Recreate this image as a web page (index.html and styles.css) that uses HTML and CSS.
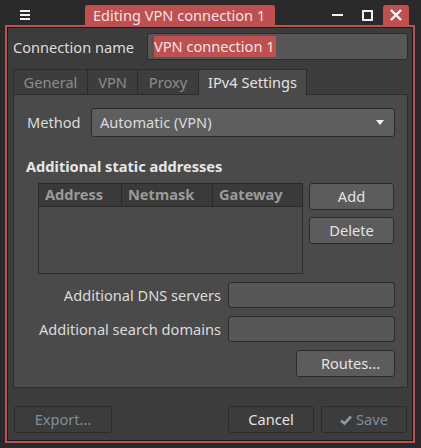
FILE: index.html
```html
<!DOCTYPE html>
<html>
<head>
<meta charset="utf-8">
<link rel="stylesheet" href="styles.css">
</head>
<body>
<div class="titlebar">
  <div class="menu-icon"><span></span><span></span><span></span></div>
  <div class="title-tab">Editing VPN connection 1</div>
  <div class="spacer"></div>
  <div class="win-btn min"><span></span></div>
  <div class="win-btn max"><span></span></div>
  <div class="win-btn close">
    <svg width="14" height="14" viewBox="0 0 14 14"><path d="M2 2 L12 12 M12 2 L2 12" stroke="#fff" stroke-width="2.4" fill="none"/></svg>
  </div>
</div>
<div class="window">
  <div class="inner">
    <div class="name-row">
      <label class="name-label">Connection name</label>
      <div class="field name-field"><span class="sel">VPN connection 1</span></div>
    </div>
    <div class="tabs">
      <div class="tab t-general">General</div>
      <div class="tab t-vpn">VPN</div>
      <div class="tab t-proxy">Proxy</div>
      <div class="tab active t-ipv4">IPv4 Settings</div>
    </div>
    <div class="pane">
      <div class="method-row">
        <span class="lbl">Method</span>
        <div class="combo"><span>Automatic (VPN)</span><span class="arrow"></span></div>
      </div>
      <div class="section-title">Additional static addresses</div>
      <div class="addr-row">
        <div class="table">
          <div class="thead">
            <div class="th c1">Address</div>
            <div class="th c2">Netmask</div>
            <div class="th c3">Gateway</div>
          </div>
        </div>
        <div class="side-btns">
          <div class="btn">Add</div>
          <div class="btn">Delete</div>
        </div>
      </div>
      <div class="form-grid">
        <span class="flbl">Additional DNS servers</span>
        <div class="field"></div>
        <span class="flbl">Additional search domains</span>
        <div class="field"></div>
      </div>
      <div class="routes-row"><div class="btn routes">Routes...</div></div>
    </div>
    <div class="bottom">
      <div class="btn bb export disabled">Export...</div>
      <div class="spacer"></div>
      <div class="btn bb cancel">Cancel</div>
      <div class="btn bb save disabled"><svg width="12" height="10" viewBox="0 0 12 10"><path d="M1 5.5 L4.5 8.5 L11 1.5" stroke="#8a9aa8" stroke-width="2.6" fill="none"/></svg>Save</div>
    </div>
  </div>
</div>
</body>
</html>
```
FILE: styles.css
```css
* { box-sizing: border-box; }
html, body { margin: 0; padding: 0; }
body {
  width: 421px;
  height: 448px;
  background: #2a2a2a;
  font-family: "Noto Sans", "Open Sans", sans-serif;
  font-size: 14.6px;
  color: #dcdcdc;
  overflow: hidden;
}
.titlebar {
  height: 25px;
  display: flex;
  align-items: flex-end;
  padding-left: 20px;
  padding-right: 12px;
}
.menu-icon {
  width: 10px;
  height: 10px;
  align-self: flex-start;
  margin-top: 10px;
  display: flex;
  flex-direction: column;
  justify-content: space-between;
}
.menu-icon span { display: block; height: 2px; background: #f2f2f2; }
.title-tab {
  margin-left: 55px;
  width: 190px;
  height: 20px;
  background: #c0504f;
  border-radius: 3px 3px 0 0;
  color: #f3e4e4;
  padding-left: 8px;
  line-height: 20px;
  white-space: nowrap;
}
.spacer { flex: 1; }
.win-btn {
  height: 20px;
  display: flex;
  align-items: center;
  justify-content: center;
}
.win-btn.min { width: 12px; margin-right: 18px; }
.win-btn.min span { width: 11px; height: 2px; background: #f2f2f2; }
.win-btn.max { width: 12px; margin-right: 10px; }
.win-btn.max span { width: 11px; height: 11px; border: 2px solid #f2f2f2; }
.win-btn.close {
  width: 26px;
  background: #c0504f;
  border-radius: 3px 3px 0 0;
}
.window {
  margin-left: 5px;
  width: 410px;
  height: 418px;
  border: 2px solid #c0504f;
}
.inner {
  height: 100%;
  border: 1px solid #1c1c1c;
  background: #3c3c3c;
  padding: 5px 4px 6px 5px;
  display: flex;
  flex-direction: column;
}
.name-row { display: flex; align-items: center; height: 27px; }
.name-label { width: 134px; color: #dcdcdc; }
.field {
  background: #575757;
  border: 1px solid #2b2b2b;
  border-radius: 3px;
  height: 26px;
}
.name-field {
  flex: 1;
  height: 27px;
  display: flex;
  align-items: center;
  padding-left: 6px;
}
.sel {
  background: #c0504f;
  color: #f4e6e6;
  height: 21px;
  line-height: 20px;
  padding-right: 1px;
}
.tabs { display: flex; margin-top: 9px; height: 25px; }
.tab {
  height: 25px;
  line-height: 24px;
  background: #3d3d3d;
  color: #8c8c8c;
  border: 1px solid #2c2c2c;
  border-bottom: none;
  text-align: center;
}
.tab + .tab { border-left: none; }
.t-general { width: 75px; }
.t-vpn { width: 50px; }
.t-proxy { width: 61px; }
.t-ipv4 { width: 108px; }
.tab.active {
  background: #4a4a4a;
  color: #e2e2e2;
  height: 26px;
  margin-bottom: -1px;
  position: relative;
  z-index: 1;
}
.pane {
  height: 294px;
  background: #4a4a4a;
  border: 1px solid #2c2c2c;
  padding: 13px 12px 0 13px;
  display: flex;
  flex-direction: column;
}
.method-row { display: flex; align-items: center; height: 29px; line-height: 27px; }
.lbl { width: 64px; }
.combo {
  flex: 1;
  height: 29px;
  background: #5e5e5e;
  border: 1px solid #2b2b2b;
  border-radius: 3px;
  display: flex;
  align-items: center;
  justify-content: space-between;
  padding: 0 10px 0 8px;
}
.arrow {
  width: 0; height: 0;
  border-left: 4.5px solid transparent;
  border-right: 4.5px solid transparent;
  border-top: 5px solid #f0f0f0;
}
.section-title {
  margin-top: 19px;
  font-weight: bold;
  height: 20px;
  line-height: 20px;
  color: #e6e6e6;
  margin-left: -1px;
}
.addr-row { display: flex; margin-top: 7px; margin-left: 11px; }
.table {
  width: 265px;
  height: 91px;
  border: 1px solid #2a2a2a;
  background: #4a4a4a;
}
.thead { display: flex; height: 23px; background: #3a3a3a; border-bottom: 1px solid #2a2a2a; }
.th {
  font-weight: bold;
  color: #9a9a9a;
  line-height: 21px;
  padding-left: 6px;
  border-right: 1px solid #2a2a2a;
  white-space: nowrap;
}
.c1 { width: 83px; }
.c2 { width: 91px; }
.c3 { flex: 1; border-right: none; }
.side-btns { margin-left: 6px; display: flex; flex-direction: column; gap: 7px; }
.btn {
  background: #5c5c5c;
  border: 1px solid #2b2b2b;
  border-radius: 3px;
  height: 27px;
  line-height: 25px;
  text-align: center;
  color: #e4e4e4;
}
.side-btns .btn { width: 85px; }
.form-grid {
  display: grid;
  grid-template-columns: 1fr 167px;
  column-gap: 7px;
  row-gap: 8px;
  margin-top: 8px;
  align-items: center;
}
.flbl { text-align: right; white-space: nowrap; }
.routes-row { display: flex; justify-content: flex-end; margin-top: 8px; }
.routes { width: 99px; height: 27px; padding-left: 10px; }
.bottom { display: flex; margin-top: 18px; height: 27px; padding-left: 1px; }
.bb { background: #3c3c3c; }
.export { width: 98px; }
.cancel { width: 86px; margin-right: 7px; color: #e4e4e4; }
.save { width: 86px; margin-right: 1px; display: flex; align-items: center; justify-content: center; gap: 4px; }
.disabled { color: #7e8e9c; }
```
